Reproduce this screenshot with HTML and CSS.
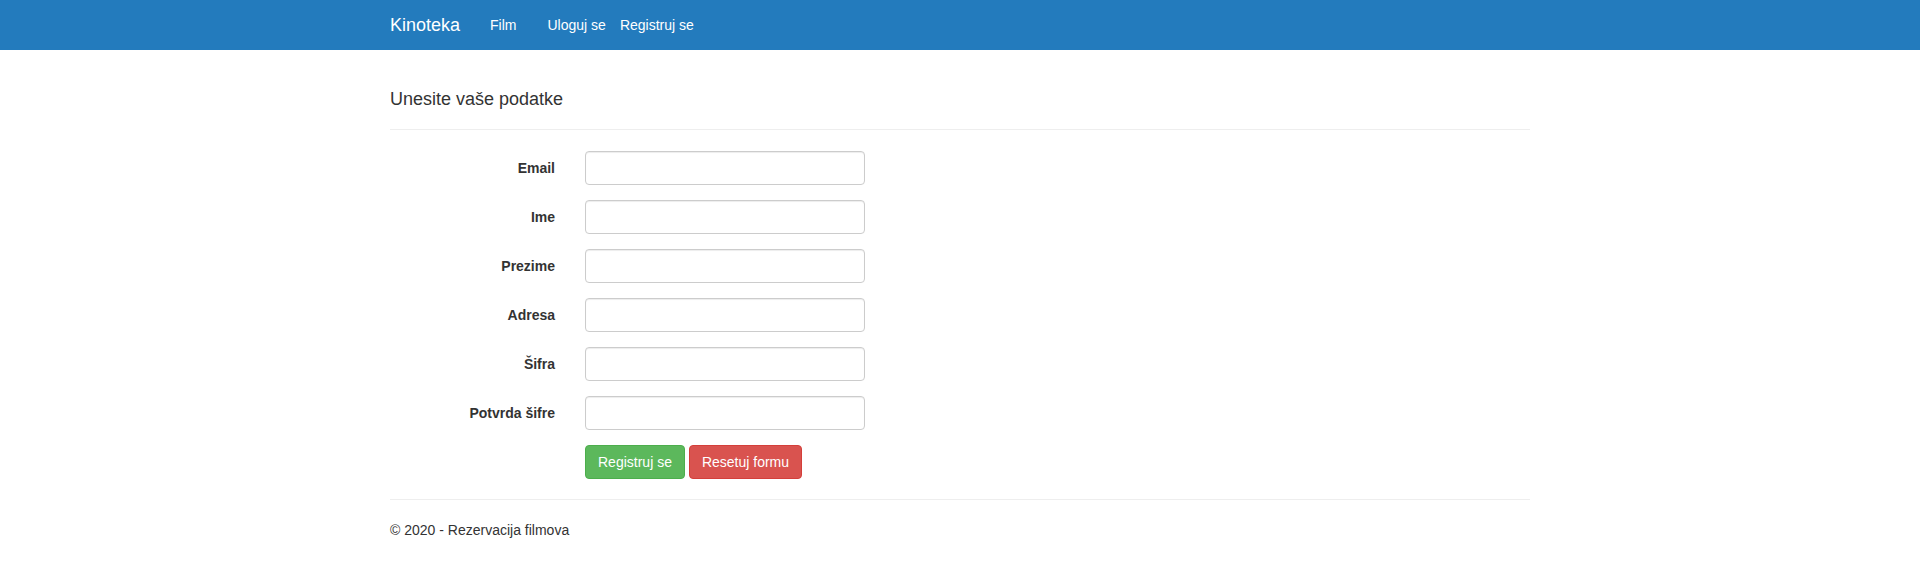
FILE: index.html
```html
<!DOCTYPE html>
<html lang="sr">
<head>
<meta charset="utf-8">
<title>Registracija - Kinoteka</title>
<link rel="stylesheet" href="styles.css">
</head>
<body>
<header class="navbar">
  <div class="nav-inner">
    <a class="brand" href="#">Kinoteka</a>
    <ul class="nav-list">
      <li><a class="nav-link" href="#">Film</a></li>
    </ul>
    <ul class="nav-list nav-login">
      <li><a class="nav-link nav-link-tight" href="#">Uloguj se</a></li>
      <li><a class="nav-link nav-link-tight" href="#">Registruj se</a></li>
    </ul>
  </div>
</header>
<main class="container">
  <h4 class="title">Unesite vaše podatke</h4>
  <hr class="rule">
  <form class="form">
    <div class="form-row">
      <label class="form-label" for="email">Email</label>
      <div class="form-field"><input class="form-input" id="email" type="text"></div>
    </div>
    <div class="form-row">
      <label class="form-label" for="ime">Ime</label>
      <div class="form-field"><input class="form-input" id="ime" type="text"></div>
    </div>
    <div class="form-row">
      <label class="form-label" for="prezime">Prezime</label>
      <div class="form-field"><input class="form-input" id="prezime" type="text"></div>
    </div>
    <div class="form-row">
      <label class="form-label" for="adresa">Adresa</label>
      <div class="form-field"><input class="form-input" id="adresa" type="text"></div>
    </div>
    <div class="form-row">
      <label class="form-label" for="sifra">Šifra</label>
      <div class="form-field"><input class="form-input" id="sifra" type="password"></div>
    </div>
    <div class="form-row">
      <label class="form-label" for="potvrda">Potvrda šifre</label>
      <div class="form-field"><input class="form-input" id="potvrda" type="password"></div>
    </div>
    <div class="form-row form-row-last">
      <div class="form-label"></div>
      <div class="form-field buttons">
        <button type="button" class="btn btn-success">Registruj se</button>
        <button type="reset" class="btn btn-danger">Resetuj formu</button>
      </div>
    </div>
  </form>
  <hr class="rule rule-footer">
  <footer class="footer">
    <p>© 2020 - Rezervacija filmova</p>
  </footer>
</main>
</body>
</html>
```

FILE: styles.css
```css
* { box-sizing: border-box; }

html, body {
  margin: 0;
  padding: 0;
}

body {
  font-family: "Liberation Sans", Arial, Helvetica, sans-serif;
  font-size: 14px;
  line-height: 20px;
  color: #333;
  background: #fff;
}

.navbar {
  height: 50px;
  background: #237bbd;
}

.nav-inner {
  width: 1170px;
  margin: 0 auto;
  padding: 0 15px;
  display: flex;
  align-items: flex-start;
}

.brand {
  display: block;
  margin-left: -15px;
  padding: 15px;
  font-size: 18px;
  line-height: 20px;
  color: #fff;
  text-decoration: none;
}

.nav-list {
  display: flex;
  list-style: none;
  margin: 0;
  padding: 0;
}

.nav-login {
  margin-left: 9px;
}

.nav-link {
  display: block;
  padding: 15px;
  line-height: 20px;
  color: #fff;
  text-decoration: none;
}

.nav-link-tight {
  padding: 15px 7px;
}

.container {
  width: 1170px;
  margin: 0 auto;
  padding: 39px 15px 0;
}

.title {
  margin: 0;
  font-size: 18px;
  font-weight: 500;
  line-height: 20px;
}

.rule {
  margin: 20px 0 21px;
  border: 0;
  border-top: 1px solid #eee;
  height: 0;
}

.rule-footer {
  margin: 20px 0 20px;
}

.form {
  margin: 0;
}

.form-row {
  display: flex;
  margin: 0 -15px 15px;
}

.form-row-last {
  margin-bottom: 0;
}

.form-label {
  width: 195px;
  padding: 7px 15px 0;
  text-align: right;
  font-weight: bold;
  line-height: 20px;
}

.form-field {
  padding: 0 15px;
}

.form-input {
  display: block;
  width: 280px;
  height: 34px;
  padding: 6px 12px;
  font: inherit;
  color: #555;
  background: #fff;
  border: 1px solid #ccc;
  border-radius: 4px;
  box-shadow: inset 0 1px 1px rgba(0, 0, 0, 0.075);
}

.buttons {
  display: flex;
  gap: 4px;
}

.btn {
  height: 34px;
  padding: 6px 12px;
  font: inherit;
  line-height: 20px;
  color: #fff;
  border: 1px solid transparent;
  border-radius: 4px;
  cursor: pointer;
}

.btn-success {
  background: #5cb85c;
  border-color: #4cae4c;
}

.btn-danger {
  background: #d9534f;
  border-color: #d43f3a;
}

.footer p {
  margin: 0 0 10px;
}
```
